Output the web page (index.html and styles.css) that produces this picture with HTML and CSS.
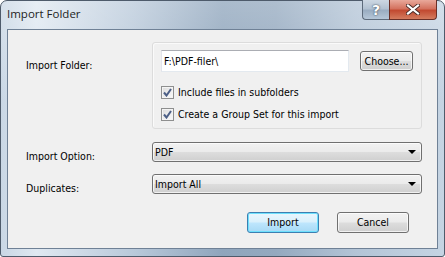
FILE: index.html
```html
<!DOCTYPE html>
<html lang="en">
<head>
  <meta charset="UTF-8">
  <title>Import Folder</title>
  <link rel="stylesheet" href="styles.css">
</head>
<body>
  <div class="window">
    <!-- Title bar -->
    <div class="titlebar">
      <span class="title">Import Folder</span>
      <div class="caption-buttons">
        <div class="cap-btn help">?</div>
        <div class="cap-btn close">
          <svg width="14" height="11" viewBox="0 0 14 11">
            <path d="M2 1.5 L12 9.5 M12 1.5 L2 9.5" stroke="#4a2a26" stroke-width="4" stroke-linecap="square"/>
            <path d="M2 1.5 L12 9.5 M12 1.5 L2 9.5" stroke="#fff" stroke-width="2.2" stroke-linecap="square"/>
          </svg>
        </div>
      </div>
    </div>

    <!-- Dialog body -->
    <div class="client">
      <div class="form-grid">
        <label class="field-label folder-label">Import Folder:</label>
        <div class="panel">
          <div class="path-row">
            <div class="textbox">F:\PDF-filer\</div>
            <div class="btn choose">Choose...</div>
          </div>
          <div class="check-row">
            <span class="checkbox"><svg width="9" height="9" viewBox="0 0 9 9"><path d="M1 4.5 L3.5 7.5 L8 1" fill="none" stroke="#4c5f86" stroke-width="2"/></svg></span>
            <span>Include files in subfolders</span>
          </div>
          <div class="check-row">
            <span class="checkbox"><svg width="9" height="9" viewBox="0 0 9 9"><path d="M1 4.5 L3.5 7.5 L8 1" fill="none" stroke="#4c5f86" stroke-width="2"/></svg></span>
            <span>Create a Group Set for this import</span>
          </div>
        </div>

        <label class="field-label">Import Option:</label>
        <div class="combo">
          <span>PDF</span>
          <span class="arrow"></span>
        </div>

        <label class="field-label">Duplicates:</label>
        <div class="combo">
          <span>Import All</span>
          <span class="arrow"></span>
        </div>
      </div>

      <div class="actions">
        <div class="btn default">Import</div>
        <div class="btn">Cancel</div>
      </div>
    </div>
  </div>
</body>
</html>
```

FILE: styles.css
```css
/* Windows 7 style dialog */
body {
  margin: 0;
  padding: 0;
  background-color: #fff;
  font-family: "DejaVu Sans Condensed", "Liberation Sans", sans-serif;
  font-size: 10.5px;
  color: #000;
}

.window {
  width: 445px;
  height: 257px;
  box-sizing: border-box;
  border: 1px solid #4e5b6b;
  border-radius: 7px 7px 3px 3px;
  background:
    linear-gradient(to bottom, rgba(255, 255, 255, 0.25), rgba(255, 255, 255, 0) 40%),
    linear-gradient(to right, #c9d7e5 0%, #dfe8f1 8%, #b9c9da 30%, #8fa5bc 50%, #94a9bf 62%, #b3c4d6 80%, #c5d4e3 100%);
  padding: 0 6px 7px 6px;
  display: flex;
  flex-direction: column;
}

.titlebar {
  height: 28px;
  display: flex;
  justify-content: space-between;
  align-items: flex-start;
}

.title {
  font-family: "Open Sans", "Noto Sans", sans-serif;
  font-size: 11.5px;
  color: #1e1e1e;
  margin-top: 5px;
}

.caption-buttons {
  display: flex;
  margin-right: 1px;
  margin-top: -1px;
}

.cap-btn {
  height: 19px;
  border: 1px solid #5d6b7b;
  border-top: none;
  display: flex;
  align-items: center;
  justify-content: center;
}

.cap-btn.help {
  width: 26px;
  border-right: none;
  border-radius: 0 0 0 4px;
  background: linear-gradient(to bottom, #cdd8e3 0%, #b3c2d2 45%, #9aadc1 55%, #b6c7d8 100%);
  color: #fff;
  font-family: "DejaVu Sans", sans-serif;
  font-weight: bold;
  font-size: 14px;
  text-shadow: 0 0 2px #45525f, 0 0 1px #45525f;
}

.cap-btn.close {
  width: 46px;
  border-radius: 0 0 4px 0;
  border-color: #6a2f27;
  background: linear-gradient(to bottom, #e9a99b 0%, #d4725f 45%, #c24a31 55%, #d47c5f 100%);
}

.client {
  flex: 1;
  background-color: #f0f0f0;
  border: 1px solid #6f8196;
  padding: 12px 15px 0 18px;
}

.form-grid {
  display: grid;
  grid-template-columns: 126px 270px;
  row-gap: 11px;
}

.field-label {
  padding-top: 8px;
  line-height: 13px;
}

.folder-label {
  padding-top: 17px;
}

.panel {
  box-sizing: border-box;
  height: 87px;
  border: 1px solid #dcdcdc;
  border-radius: 3px;
  background-color: #f0f0f0;
  box-shadow: inset 1px 1px 0 #fafafa;
  padding: 7px 8px 0 8px;
  margin-bottom: 2px;
}

.path-row {
  display: flex;
  align-items: center;
  justify-content: space-between;
  margin-bottom: 14px;
}

.textbox {
  box-sizing: border-box;
  width: 188px;
  height: 22px;
  background-color: #fff;
  border: 1px solid #e3e9ef;
  border-top-color: #abadb3;
  border-left-color: #e2e3ea;
  padding: 3px 2px;
  line-height: 14px;
}

.btn {
  box-sizing: border-box;
  height: 21px;
  border: 1px solid #707070;
  border-radius: 3px;
  background: linear-gradient(to bottom, #f2f2f2 0%, #ebebeb 48%, #dddddd 52%, #cfcfcf 100%);
  box-shadow: inset 0 0 0 1px rgba(255, 255, 255, 0.7);
  display: flex;
  align-items: center;
  justify-content: center;
  line-height: 13px;
}

.btn.choose {
  width: 53px;
  height: 20px;
}

.check-row {
  display: flex;
  align-items: center;
  gap: 4px;
  height: 13px;
  margin-bottom: 9px;
  line-height: 13px;
}

.checkbox {
  box-sizing: border-box;
  width: 13px;
  height: 13px;
  border: 1px solid #8e8f8f;
  background: linear-gradient(135deg, #dcdcdc, #fbfbfb);
  box-shadow: inset 0 0 0 1px #f4f4f4;
  display: flex;
  align-items: center;
  justify-content: center;
}

.combo {
  box-sizing: border-box;
  height: 20px;
  border: 1px solid #707070;
  border-radius: 3px;
  background: linear-gradient(to bottom, #f2f2f2 0%, #ebebeb 48%, #dddddd 52%, #cfcfcf 100%);
  box-shadow: inset 0 0 0 1px rgba(255, 255, 255, 0.7);
  display: flex;
  align-items: center;
  justify-content: space-between;
  padding: 0 5px 0 2px;
  line-height: 13px;
}

.arrow {
  width: 0;
  height: 0;
  border-left: 4px solid transparent;
  border-right: 4px solid transparent;
  border-top: 4px solid #000;
}

.actions {
  display: flex;
  justify-content: flex-end;
  gap: 18px;
  margin-top: 17px;
  padding-right: 13px;
}

.actions .btn {
  width: 72px;
}

.btn.default {
  border-color: #3c7fb1;
  background: linear-gradient(to bottom, #eaf6fd 0%, #d9f0fc 48%, #bee6fd 52%, #a7d9f5 100%);
  box-shadow: inset 0 0 0 1px #6ee0fd;
}
```
